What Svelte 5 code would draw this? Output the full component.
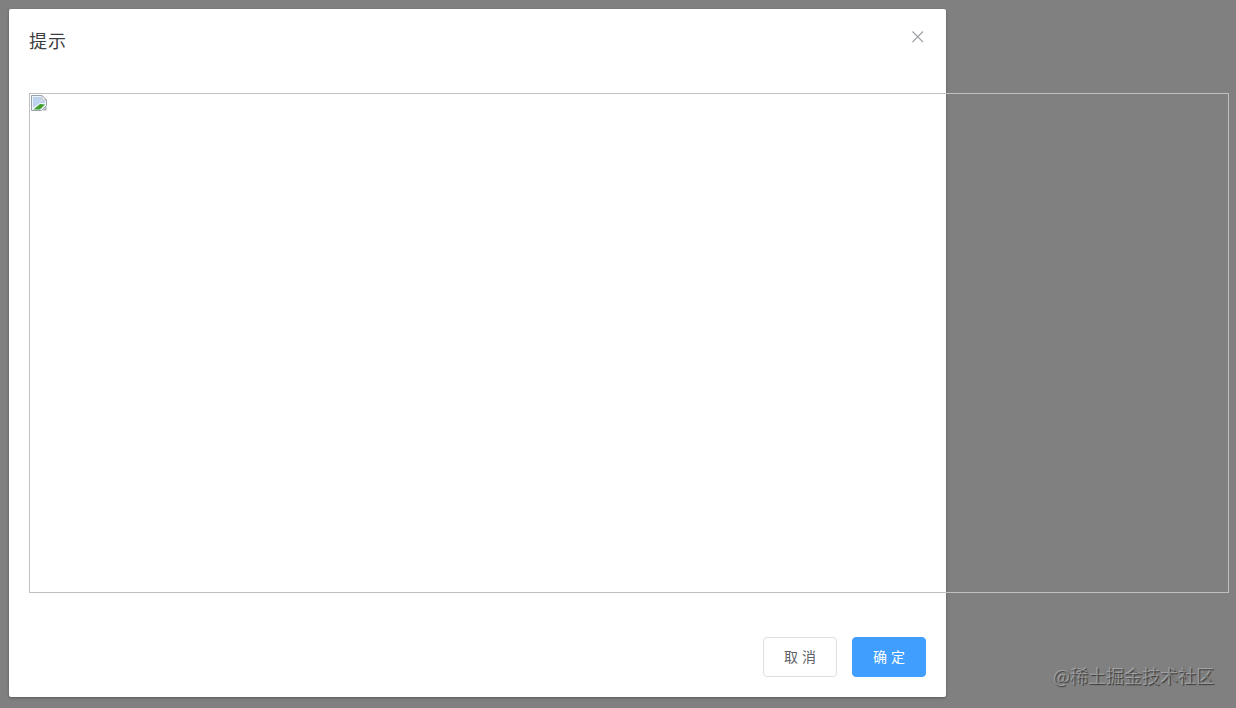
<script lang="ts">
  // Hộp thoại xác nhận có ảnh lỗi tràn ra ngoài, trên lớp phủ xám.
  const title = '提示';
</script>

<div class="overlay">
  <div class="dialog" role="dialog" aria-label={title}>
    <header class="dialog-head">
      <div class="dialog-title">{title}</div>
      <button type="button" class="close" aria-label="关闭">
        <svg viewBox="0 0 16 16" width="16" height="16" fill="none" stroke="currentColor" stroke-width="1.2">
          <path d="M2.5 2.5 13 13M13 2.5 2.5 13" />
        </svg>
      </button>
    </header>

    <div class="dialog-body">
      <div class="broken-img">
        <svg class="broken-icon" viewBox="0 0 16 16" width="16" height="16">
          <path d="M.5.5H11L15.5 5V10.5L10.5 15.5H.5Z" fill="#eef3fb" stroke="#9aa3ac" />
          <path d="M11 .5V5H15.5Z" fill="#fff" stroke="#aab1b8" />
          <path d="M2 2H10V6H14V8L9 8 3.5 12H2Z" fill="#bcd3ef" />
          <path d="M2.5 14.5 9 9 14 9.5 9 14.5Z" fill="#3f9e2e" />
          <path d="M11.5 15.5 15.5 11V15.5Z" fill="#aab0b6" />
        </svg>
      </div>
    </div>

    <footer class="dialog-foot">
      <button type="button" class="btn"><span>取 消</span></button>
      <button type="button" class="btn primary"><span>确 定</span></button>
    </footer>
  </div>

  <span class="watermark">@稀土掘金技术社区</span>
</div>

<style>
  :global(body) {
    overflow: hidden;
  }

  .overlay {
    position: relative;
    box-sizing: border-box;
    height: 708px;
    padding: 9px;
    overflow: hidden;
    background: #808080;
    font-family: "Noto Sans CJK SC", "Liberation Sans", sans-serif;
  }

  .dialog {
    position: relative;
    width: 937px;
    height: 688px;
    border-radius: 2px;
    background: #fff;
    box-shadow: 0 1px 3px rgba(0, 0, 0, 0.3);
  }

  .dialog-head {
    padding: 20px 20px 10px;
  }

  .dialog-title {
    height: 24px;
    color: #3c3d40;
    font-size: 18px;
    letter-spacing: 1px;
    line-height: 22px;
  }

  .close {
    position: absolute;
    top: 20px;
    right: 20px;
    width: 16px;
    height: 16px;
    padding: 0;
    border: none;
    background: none;
    color: #a0a3a8;
    cursor: pointer;
  }

  .close svg {
    display: block;
  }

  .dialog-body {
    padding: 30px 20px 34px;
  }

  .broken-img {
    box-sizing: border-box;
    width: 1200px;
    height: 500px;
    padding: 1px;
    border: 1px solid #c0c0c0;
  }

  .broken-icon {
    display: block;
  }

  .dialog-foot {
    display: flex;
    justify-content: flex-end;
    gap: 15px;
    padding: 10px 20px 20px;
  }

  .btn {
    box-sizing: border-box;
    width: 74px;
    height: 40px;
    padding: 0 0 2px;
    border: 1px solid #dcdfe6;
    border-radius: 4px;
    background: #fff;
    color: #606266;
    font: inherit;
    font-size: 14px;
    word-spacing: 1px;
    line-height: 1;
    cursor: pointer;
  }

  .btn.primary {
    border-color: #409eff;
    background: #409eff;
    color: #fff;
  }

  .watermark {
    position: absolute;
    right: 22px;
    bottom: 21px;
    color: rgba(255, 255, 255, 0.32);
    font-size: 18px;
    line-height: 24px;
    white-space: nowrap;
    text-shadow: 1px 1px 1px rgba(0, 0, 0, 0.55);
  }
</style>
